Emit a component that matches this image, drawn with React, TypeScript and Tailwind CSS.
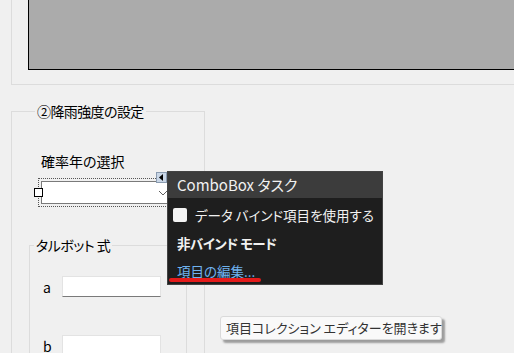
import React from 'react';

const jp = "font-['Noto_Sans_CJK_JP','Noto_Sans',sans-serif] [font-feature-settings:'palt']";

const TextRow = ({ label, className }: { label: string; className?: string }) => (
  <div className={`flex items-center ml-[13px] ${className || ''}`}>
    <span className="w-[19px] text-[14px] leading-[20px] text-black">{label}</span>
    <div className="w-[99px] h-[21px] bg-white border border-[#e3e3e3] border-b-[#7a7a7a]" />
  </div>
);

export default function App() {
  return (
    <div className={`relative w-[514px] h-[353px] overflow-hidden bg-[#f0f0f0] ${jp}`}>
      {/* top group (cut off) */}
      <div className="ml-[11px] h-[85px] border-l border-b border-[#dcdcdc] pl-[16px]">
        <div className="h-[70px] bg-[#ababab] border-l border-b border-black" />
      </div>

      {/* ② group */}
      <fieldset className="mt-[16px] ml-[11px] w-[194px] h-[300px] border border-[#dcdcdc] pl-[17px]">
        <legend className="ml-[6px] px-[2px] text-[14px] leading-[20px] text-black tracking-[-0.6px]">②降雨強度の設定</legend>

        <div className="ml-[9px] mt-[30px] pl-[3px] text-[14px] leading-[20px] text-black">確率年の選択</div>
        <div className="ml-[9px] mt-[7px] w-[136px] border border-dotted border-[#555] p-[2px]">
          <div className="h-[23px] bg-white border border-[#7a7a7a] flex items-center justify-end pr-[2px]">
            <svg width="10" height="6" viewBox="0 0 10 6">
              <path d="M1 1l4 4 4-4" fill="none" stroke="#606060" strokeWidth="1" />
            </svg>
          </div>
        </div>

        <fieldset className="mt-[28px] w-[158px] h-[200px] border border-[#dcdcdc]">
          <legend className="ml-[4px] px-[2px] text-[14px] leading-[20px] text-black tracking-[-0.5px]">タルボット 式</legend>
          <TextRow label="a" className="mt-[21px]" />
          <TextRow label="b" className="mt-[38px]" />
        </fieldset>
      </fieldset>

      {/* selection handle */}
      <div className="absolute left-[34px] top-[188px] w-[9px] h-[9px] bg-white border border-black" />

      {/* smart tag glyph */}
      <div className="absolute left-[156px] top-[172px] w-[11px] h-[11px] bg-[#c9d6e6] border border-[#8a9bb0] flex items-center justify-center">
        <svg width="5" height="7" viewBox="0 0 5 7">
          <path d="M4 0v7L0 3.5z" fill="#000" />
        </svg>
      </div>

      {/* ComboBox tasks panel */}
      <div className="absolute left-[167px] top-[171px] w-[216px] h-[114px] bg-[#1e1e1e] border border-[#434343] text-[#f1f1f1]">
        <div className="h-[26px] bg-[#3c3c3c] flex items-center pl-[9px] text-[15px]">ComboBox タスク</div>
        <div className="flex items-center mt-[8px] pl-[5px]">
          <div className="w-[14px] h-[14px] rounded-[2px] bg-[#f3f3f3]" />
          <span className="ml-[8px] text-[13.5px] leading-[18px]">データ バインド項目を使用する</span>
        </div>
        <div className="mt-[10px] pl-[9px] text-[13.5px] leading-[18px] font-bold tracking-[-0.5px]">非バインド モード</div>
        <div className="mt-[10px] pl-[9px] text-[13.5px] leading-[18px] text-[#6fb2ee] underline underline-offset-2">項目の編集...</div>
      </div>

      {/* red annotation */}
      <div className="absolute left-[169px] top-[278px] w-[92px] h-[4px] rounded-full bg-[#e41b1b]" />

      {/* tooltip */}
      <div className="absolute left-[220px] top-[316px] w-[222px] h-[24px] bg-[#f9f9f9] border border-[#dadada] rounded-[3px] shadow-[3px_3px_2px_rgba(0,0,0,0.35)] flex items-center pl-[5px] text-[13px] text-[#333] whitespace-nowrap">
        項目コレクション エディターを開きます
      </div>
    </div>
  );
}
